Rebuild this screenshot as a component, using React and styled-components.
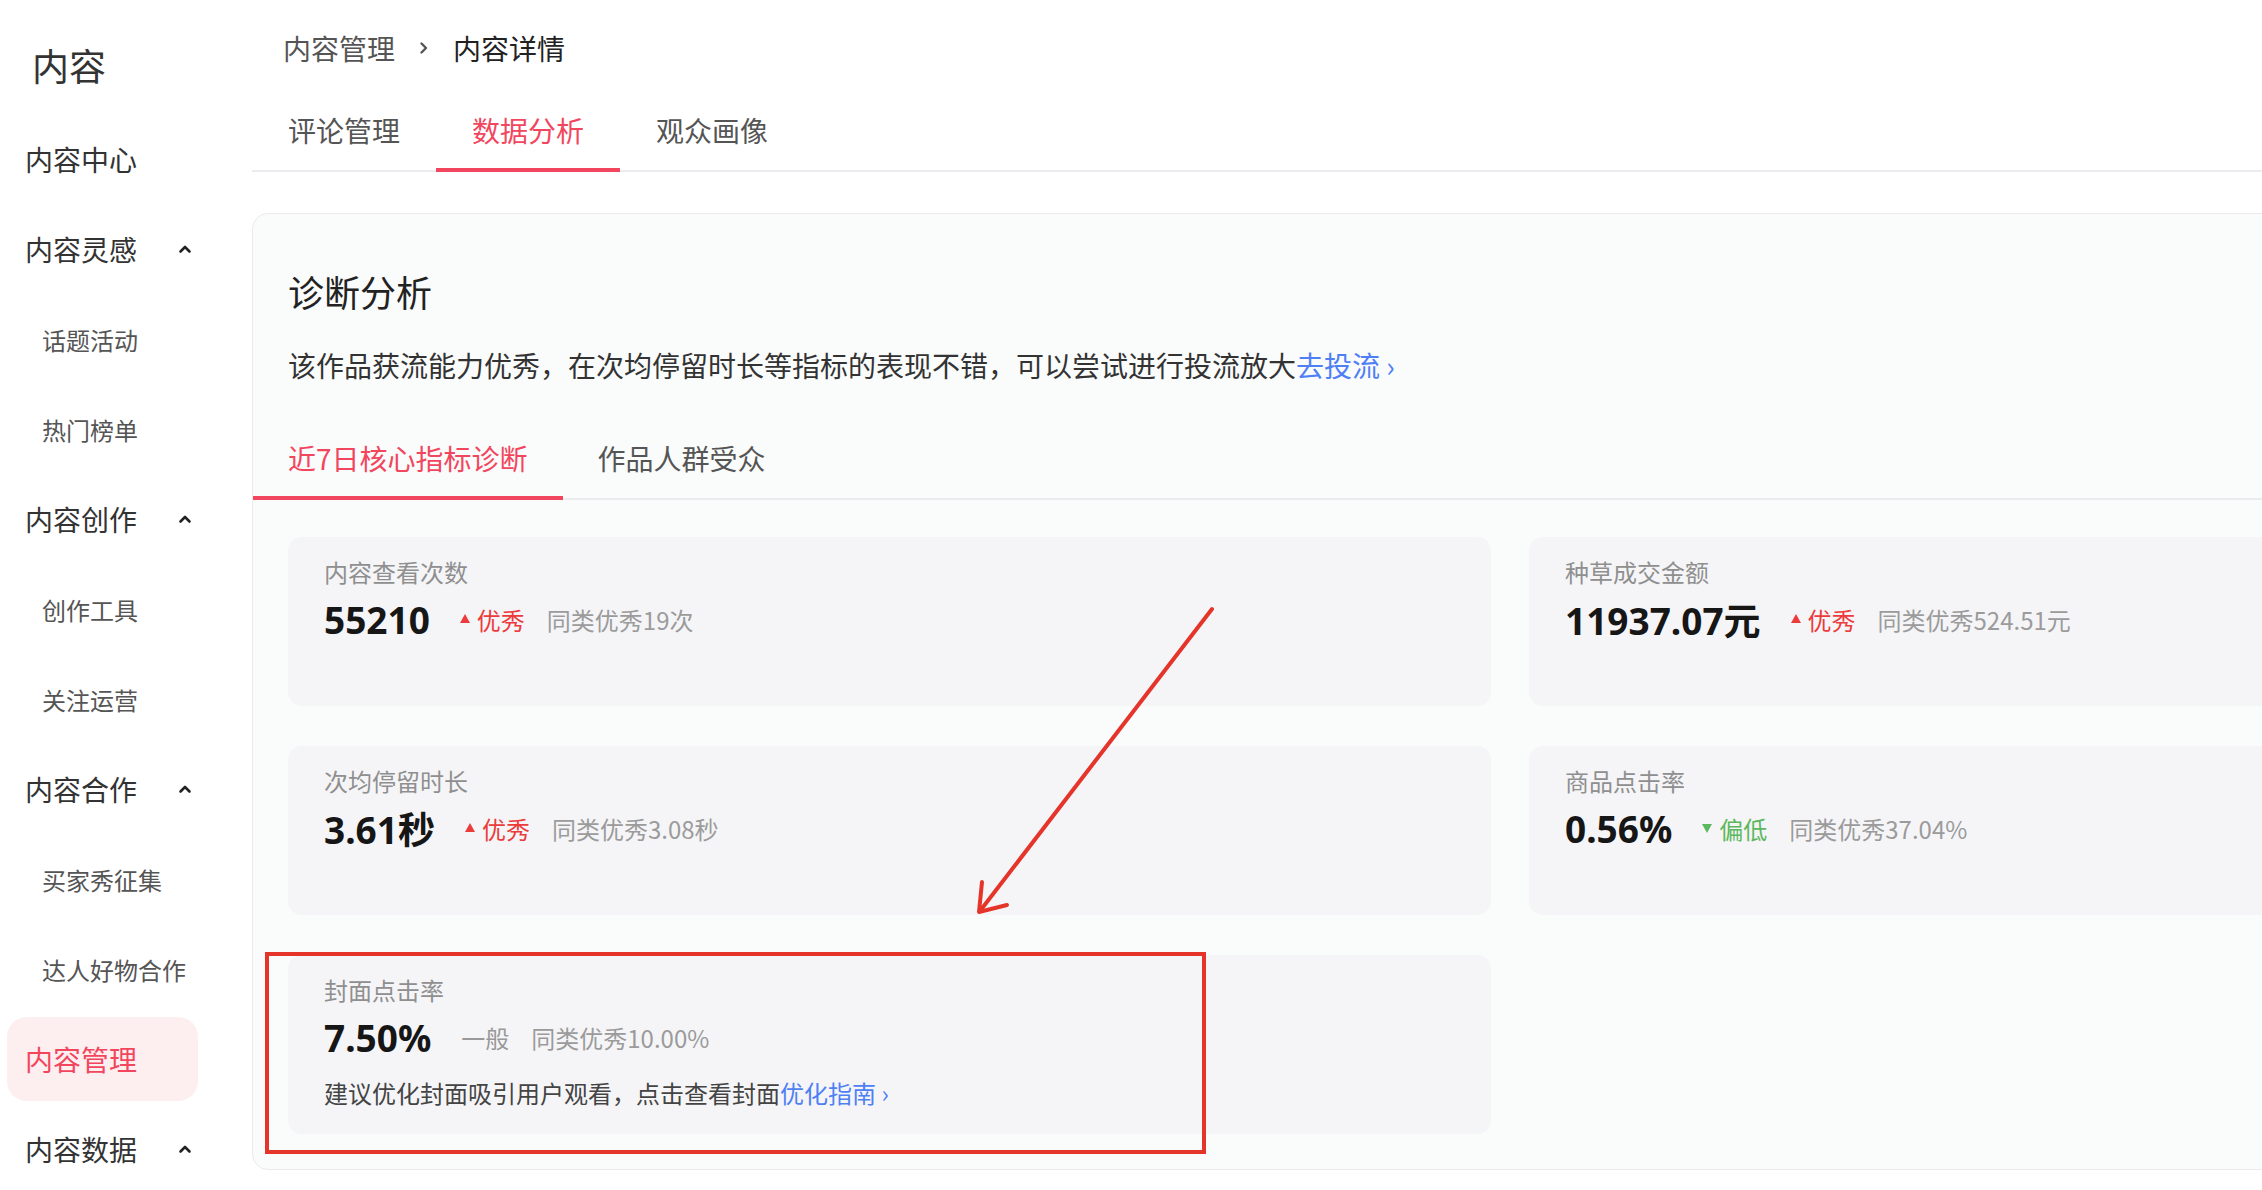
import React from 'react';
import styled, {createGlobalStyle} from 'styled-components';

const GlobalStyle = createGlobalStyle`
	html, body {
		margin: 0;
		padding: 0;
		background: #fff;
		overflow: hidden;
	}
	body {
		font-family: "Noto Sans CJK SC", "Noto Sans", sans-serif;
		color: #333;
	}
`

const Page = styled.div`
	position: relative;
	display: flex;
	width: 2262px;
	height: 1190px;
	overflow: hidden;
`

/* ---------- sidebar ---------- */

const Sidebar = styled.nav`
	flex-shrink: 0;
	display: flex;
	flex-direction: column;
	gap: 6px;
	width: 252px;
	background: #fff;
`

const SideTitle = styled.div`
	padding: 40px 0 21px 32px;
	font-size: 37px;
	line-height: 50px;
	color: #333;
`

const MenuItem = styled.div`
	display: flex;
	align-items: center;
	flex-shrink: 0;
	width: 191px;
	height: 84px;
	margin-left: 7px;
	padding: 0 5px 0 ${p => (p.$sub ? 35 : 18)}px;
	box-sizing: border-box;
	border-radius: 20px;
	font-size: ${p => (p.$sub ? 24 : 28)}px;
	color: ${p => (p.$active ? '#f2465e' : p.$sub ? '#555' : '#333')};
	background: ${p => (p.$active ? '#fdeef0' : 'transparent')};
`

const Caret = styled.svg`
	margin-left: auto;
	width: 16px;
	height: 16px;
`

/* ---------- main column ---------- */

const Main = styled.main`
	flex-shrink: 0;
	width: 2520px;
	display: flex;
	flex-direction: column;
`

const Breadcrumb = styled.div`
	display: flex;
	align-items: center;
	gap: 22px;
	padding: 28px 0 0 31px;
	font-size: 28px;
	line-height: 40px;
	color: #555;
`

const Crumb = styled.span`
	color: ${p => (p.$current ? '#222' : '#555')};
`

const Sep = styled.svg`
	width: 14px;
	height: 14px;
`

const TabBar = styled.div`
	display: flex;
	border-bottom: 2px solid #ececf0;
`

const Tab = styled.div`
	padding: 42px 36px 18px;
	margin-bottom: -2px;
	font-size: 28px;
	line-height: 40px;
	color: ${p => (p.$active ? '#f2465e' : '#555')};
	border-bottom: 4px solid ${p => (p.$active ? '#f2465e' : 'transparent')};
`

const Panel = styled.section`
	margin-top: 41px;
	background: #fafbfb;
	border: 1px solid #ebebeb;
	border-radius: 16px;
	padding-bottom: 35px;
`

const Heading = styled.h2`
	margin: 0;
	padding: 52px 0 0 35px;
	font-size: 36px;
	line-height: 50px;
	font-weight: 400;
	color: #222;
`

const Summary = styled.p`
	margin: 0;
	padding: 26px 0 0 35px;
	font-size: 28px;
	line-height: 46px;
	color: #333;
`

const LinkText = styled.span`
	color: #4f7ff5;
`

const SubTabBar = styled.div`
	display: flex;
	margin-top: 50px;
	border-bottom: 2px solid #ececf0;
`

const SubTab = styled.div`
	padding: 0 35px 18px;
	margin-bottom: -2px;
	font-size: 28px;
	line-height: 40px;
	color: ${p => (p.$active ? '#f2465e' : '#555')};
	border-bottom: 4px solid ${p => (p.$active ? '#f2465e' : 'transparent')};
`

const MetricGrid = styled.div`
	display: grid;
	grid-template-columns: 1203px 1203px;
	gap: 40px 38px;
	align-items: start;
	padding: 37px 0 0 35px;
`

const MetricCard = styled.div`
	min-height: 169px;
	box-sizing: border-box;
	padding: 20px 36px 26px;
	border-radius: 14px;
	background: #f5f5f8;
`

const MetricName = styled.div`
	font-size: 24px;
	line-height: 30px;
	color: #8f8f8f;
`

const ValueRow = styled.div`
	display: flex;
	align-items: center;
	margin-top: 7px;
	height: 50px;
`

const Value = styled.span`
	font-family: "Noto Sans", "Noto Sans CJK SC", sans-serif;
	font-size: 37px;
	font-weight: 700;
	color: #161616;
`

const Level = styled.span`
	display: flex;
	align-items: center;
	gap: 7px;
	margin-left: 30px;
	font-size: 24px;
	color: ${p => p.$tone === 'good' ? '#ec3b3b' : p.$tone === 'low' ? '#5cb85c' : '#999'};
`

const Peer = styled.span`
	margin-left: 22px;
	font-size: 24px;
	color: #9b9b9b;
`

const Tip = styled.div`
	margin-top: 16px;
	font-size: 24px;
	line-height: 30px;
	color: #444;
`

const Marks = styled.svg`
	position: absolute;
	left: 0;
	top: 0;
	pointer-events: none;
`

const menu = [
	{label: '内容中心'},
	{label: '内容灵感', group: true},
	{label: '话题活动', sub: true},
	{label: '热门榜单', sub: true},
	{label: '内容创作', group: true},
	{label: '创作工具', sub: true},
	{label: '关注运营', sub: true},
	{label: '内容合作', group: true},
	{label: '买家秀征集', sub: true},
	{label: '达人好物合作', sub: true},
	{label: '内容管理', active: true},
	{label: '内容数据', group: true},
];

const metrics = [
	{name: '内容查看次数', value: '55210', tone: 'good', level: '优秀', peer: '同类优秀19次'},
	{name: '种草成交金额', value: '11937.07元', tone: 'good', level: '优秀', peer: '同类优秀524.51元'},
	{name: '次均停留时长', value: '3.61秒', tone: 'good', level: '优秀', peer: '同类优秀3.08秒'},
	{name: '商品点击率', value: '0.56%', tone: 'low', level: '偏低', peer: '同类优秀37.04%'},
	{name: '封面点击率', value: '7.50%', tone: 'normal', level: '一般', peer: '同类优秀10.00%',
		tip: '建议优化封面吸引用户观看，点击查看封面', tipLink: '优化指南'},
];

function Triangle({down}) {
	return (
		<svg width="10" height="10" viewBox="0 0 10 10">
			{down
				? <path d="M0 1 L10 1 L5 10 Z" fill="currentColor" />
				: <path d="M0 9 L10 9 L5 0 Z" fill="currentColor" />}
		</svg>
	);
}

function Chevron() {
	return (
		<Caret viewBox="0 0 16 16">
			<path d="M3.5 10.5 L8 6 L12.5 10.5" fill="none" stroke="#222" strokeWidth="2.6" strokeLinecap="round" strokeLinejoin="round" />
		</Caret>
	);
}

function Metric({data}) {
	return (
		<MetricCard>
			<MetricName>{data.name}</MetricName>
			<ValueRow>
				<Value>{data.value}</Value>
				<Level $tone={data.tone}>
					{data.tone !== 'normal' && <Triangle down={data.tone === 'low'} />}
					{data.level}
				</Level>
				<Peer>{data.peer}</Peer>
			</ValueRow>
			{data.tip && (
			<Tip>
				{data.tip}<LinkText>{data.tipLink} ›</LinkText>
			</Tip>
			)}
		</MetricCard>
	);
}

export default function App() {
	return (
		<Page>
			<GlobalStyle />
			<Sidebar>
				<SideTitle>内容</SideTitle>
				{menu.map((item, index) => (
				<MenuItem key={index} $sub={item.sub} $active={item.active}>
					{item.label}
					{item.group && <Chevron />}
				</MenuItem>
				))}
			</Sidebar>
			<Main>
				<Breadcrumb>
					<Crumb>内容管理</Crumb>
					<Sep viewBox="0 0 14 14">
						<path d="M4.5 2.5 L9 7 L4.5 11.5" fill="none" stroke="#555" strokeWidth="2.4" strokeLinecap="round" strokeLinejoin="round" />
					</Sep>
					<Crumb $current>内容详情</Crumb>
				</Breadcrumb>
				<TabBar>
					<Tab>评论管理</Tab>
					<Tab $active>数据分析</Tab>
					<Tab>观众画像</Tab>
				</TabBar>
				<Panel>
					<Heading>诊断分析</Heading>
					<Summary>
						该作品获流能力优秀，在次均停留时长等指标的表现不错，可以尝试进行投流放大<LinkText>去投流 ›</LinkText>
					</Summary>
					<SubTabBar>
						<SubTab $active>近7日核心指标诊断</SubTab>
						<SubTab>作品人群受众</SubTab>
					</SubTabBar>
					<MetricGrid>
						{metrics.map((m, index) => (
						<Metric key={index} data={m} />
						))}
					</MetricGrid>
				</Panel>
			</Main>
			<Marks width="2262" height="1190" viewBox="0 0 2262 1190">
				<rect x="267" y="954" width="937" height="198" fill="none" stroke="#e5352b" strokeWidth="4" />
				<g fill="none" stroke="#e5352b" strokeWidth="4" strokeLinecap="round" strokeLinejoin="round">
					<path d="M1212 609 L980 911" />
					<path d="M982 882 L979 912 L1007 905" />
				</g>
			</Marks>
		</Page>
	);
}
